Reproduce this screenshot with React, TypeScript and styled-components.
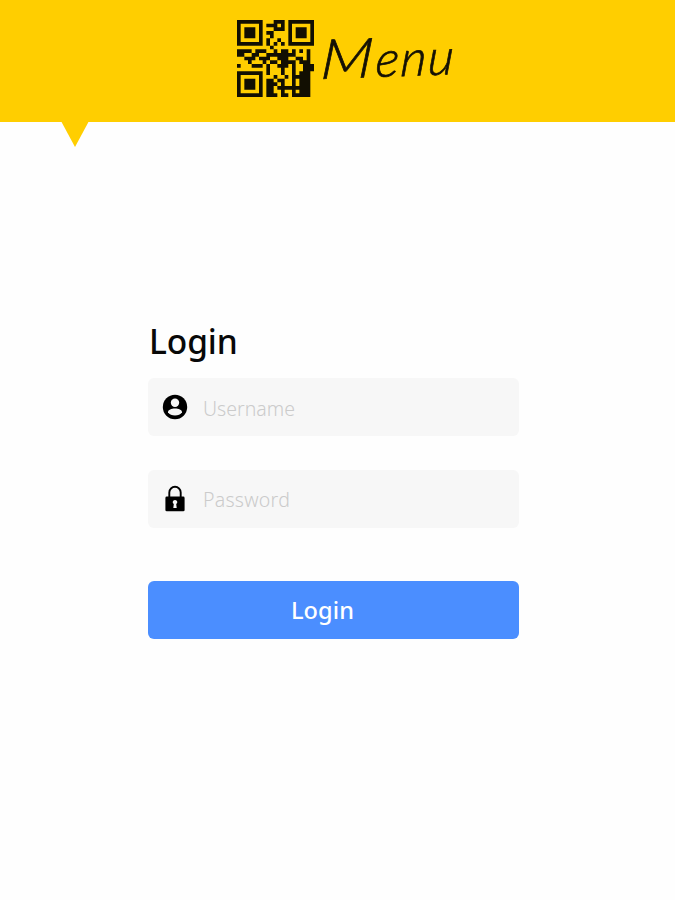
import React from "react";
import styled, { createGlobalStyle } from "styled-components";

const GlobalStyle = createGlobalStyle`
  * { box-sizing: border-box; }
  body { margin: 0; background: #fefefe; font-family: "Noto Sans", sans-serif; }
`;

const Page = styled.div`
  display: flex;
  flex-direction: column;
  min-height: 900px;
`;

const Header = styled.header`
  position: relative;
  display: flex;
  gap: 6px;
  height: 122px;
  padding: 20px 0 0 237px;
  background: #ffce00;
`;

const Pointer = styled.span`
  position: absolute;
  top: 121px;
  left: 61px;
  width: 28px;
  height: 26px;
  background: #ffce00;
  clip-path: polygon(0 0, 100% 0, 50% 100%);
`;

const QrCode = styled.svg`
  width: 77px;
  height: 77px;
`;

const Wordmark = styled.span`
  font: italic 300 50px/76px "Lato", cursive;
  letter-spacing: 1.6px;
  color: #151105;
  white-space: nowrap;
  -webkit-text-stroke: 0.7px #151105;
  transform: rotate(-2deg) skewX(-6deg);
  transform-origin: 0 56px;
`;

const Capital = styled.span`
  display: inline-block;
  margin-right: 7px;
  font-size: 55px;
  transform: scaleX(1.13);
  transform-origin: 0 50%;
`;

const Form = styled.form`
  display: flex;
  flex-direction: column;
  width: 371px;
  margin: 198px 0 0 148px;
`;

const Title = styled.h1`
  height: 58px;
  margin: 0;
  padding-left: 1px;
  font-size: 33.5px;
  font-weight: 500;
  line-height: 43px;
  letter-spacing: -0.1px;
  color: #080808;
`;

const Field = styled.label`
  display: flex;
  align-items: center;
  height: 58px;
  margin-bottom: 34px;
  padding-left: 14px;
  gap: 15px;
  border-radius: 6px;
  background: #f7f7f7;
`;

const FieldIcon = styled.svg`
  flex: none;
  width: 26px;
  height: 28px;
`;

const Input = styled.input<{ $tracking: number; $drop: number }>`
  width: 280px;
  height: 40px;
  padding: ${(p) => p.$drop}px 0 0;
  border: 0;
  outline: 0;
  background: transparent;
  font: 300 19.5px "Noto Sans", sans-serif;
  letter-spacing: ${(p) => p.$tracking}px;
  &::placeholder { color: #cbcbcb; opacity: 1; }
`;

const Submit = styled.button`
  height: 58px;
  margin-top: 19px;
  padding: 0 22px 0 0;
  border: 0;
  border-radius: 6px;
  background: #4b8eff;
  color: #fff;
  font: 500 23.5px "Noto Sans", sans-serif;
  letter-spacing: 0.1px;
`;

const modules = [
  "111111100011101111111",
  "100000101110101000001",
  "101110100011101011101",
  "101110101100001011101",
  "101110100100001011101",
  "100000101001001000001",
  "111111101010101111111",
  "000000000100000000000",
  "111101110010110101010",
  "110011001111111100010",
  "001110111001110011010",
  "000100010110111101110",
  "100011101001110100111",
  "000000001000100100111",
  "111111101000100101110",
  "100000100010010111110",
  "101110101101100101110",
  "101110101110100101110",
  "101110101101111111110",
  "100000101100100101110",
  "111111101110110111110",
];

const qrPath = modules
  .map((row, y) => [...row].map((cell, x) => (cell === "1" ? `M${x} ${y}h1v1h-1z` : "")).join(""))
  .join("");

export default function App() {
  return (
    <Page>
      <GlobalStyle />
      <Header>
        <QrCode viewBox="0 0 21 21" aria-label="QR code">
          <path d={qrPath} fill="#120f02" />
        </QrCode>
        <Wordmark><Capital>M</Capital>enu</Wordmark>
        <Pointer />
      </Header>
      <Form onSubmit={(e) => e.preventDefault()}>
        <Title>Login</Title>
        <Field>
          <FieldIcon viewBox="0 0 26 28">
            <circle cx="13" cy="14" r="12.2" />
            <circle cx="13" cy="9.7" r="4.2" fill="#f7f7f7" />
            <path d="M6 19.3c0-5 14-5 14 0-2.6 4.4-11.4 4.4-14 0z" fill="#f7f7f7" />
          </FieldIcon>
          <Input placeholder="Username" $tracking={0} $drop={2} />
        </Field>
        <Field>
          <FieldIcon viewBox="0 0 26 28">
            <path d="M7.3 13V7.5a5.7 5.7 0 0 1 11.4 0V13" fill="none" stroke="#000" strokeWidth="1.9" />
            <rect x="3.4" y="11.5" width="19.2" height="14.8" rx="1.4" />
            <path d="M13 15a2.2 2.2 0 0 1 1.2 4.1l.5 3.9h-3.4l.5-3.9A2.2 2.2 0 0 1 13 15z" fill="#f7f7f7" />
          </FieldIcon>
          <Input type="password" placeholder="Password" $tracking={0.25} $drop={1} />
        </Field>
        <Submit>Login</Submit>
      </Form>
    </Page>
  );
}
